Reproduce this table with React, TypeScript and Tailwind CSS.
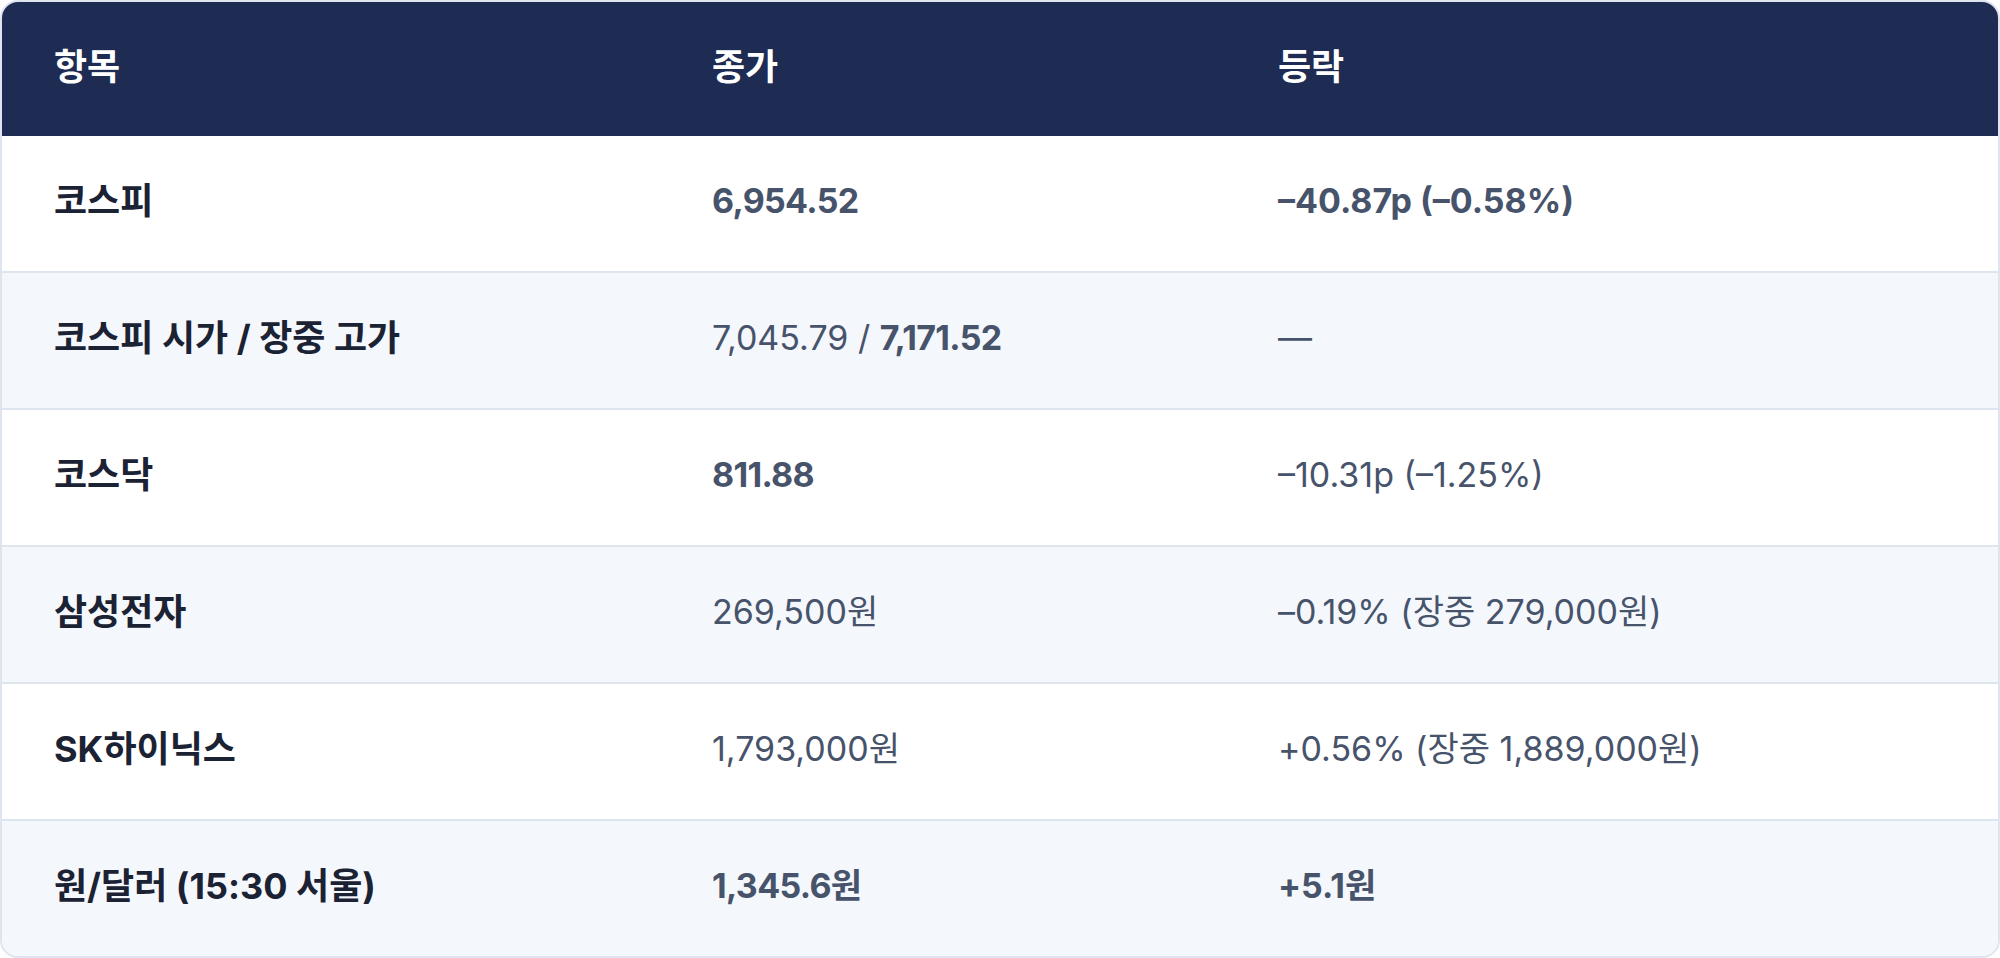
type Row = {
  label: string;
  close: React.ReactNode;
  change: React.ReactNode;
};

const rows: Row[] = [
  {
    label: "코스피",
    close: <b className="font-bold tracking-[-0.02em]">6,954.52</b>,
    change: <b className="font-bold">–40.87p (–0.58%)</b>,
  },
  {
    label: "코스피 시가 / 장중 고가",
    close: (
      <>
        7,045.79 / <b className="font-bold tracking-[-0.02em]">7,171.52</b>
      </>
    ),
    change: "—",
  },
  { label: "코스닥", close: <b className="font-bold tracking-[-0.02em]">811.88</b>, change: "–10.31p (–1.25%)" },
  { label: "삼성전자", close: "269,500원", change: "–0.19% (장중 279,000원)" },
  { label: "SK하이닉스", close: "1,793,000원", change: "+0.56% (장중 1,889,000원)" },
  {
    label: "원/달러 (15:30 서울)",
    close: <b className="font-bold tracking-[-0.02em]">1,345.6원</b>,
    change: <b className="font-bold">+5.1원</b>,
  },
];

const cols = "grid grid-cols-[658px_566px_1fr] items-center";

export default function App() {
  return (
    <main
      className="h-[958px] w-[2000px] bg-white"
      style={{ fontFamily: 'Inter, "Noto Sans CJK KR", sans-serif' }}
    >
      <div className="flex h-full flex-col overflow-hidden rounded-[18px] border-2 border-[#dfe5ef]">
        <div className={`${cols} h-[134px] shrink-0 bg-[#1e2b53] pb-[4px] text-[36px] font-bold text-white`}>
          <div className="pl-[52px]">항목</div>
          <div className="pl-[52px]">종가</div>
          <div className="pl-[52px]">등락</div>
        </div>
        {rows.map((r, i) => (
          <div
            key={r.label}
            className={`${cols} flex-1 pb-[6px] text-[34px] ${i > 0 ? "border-t-2 border-[#dfe5ef]" : ""} ${
              i % 2 === 1 ? "bg-[#f4f7fc]" : "bg-white"
            }`}
          >
            <div className="pl-[52px] text-[36px] font-bold text-[#1b2233]">{r.label}</div>
            <div className="pl-[52px] text-[#47536b]">{r.close}</div>
            <div className="pl-[52px] text-[#47536b]">{r.change}</div>
          </div>
        ))}
      </div>
    </main>
  );
}
